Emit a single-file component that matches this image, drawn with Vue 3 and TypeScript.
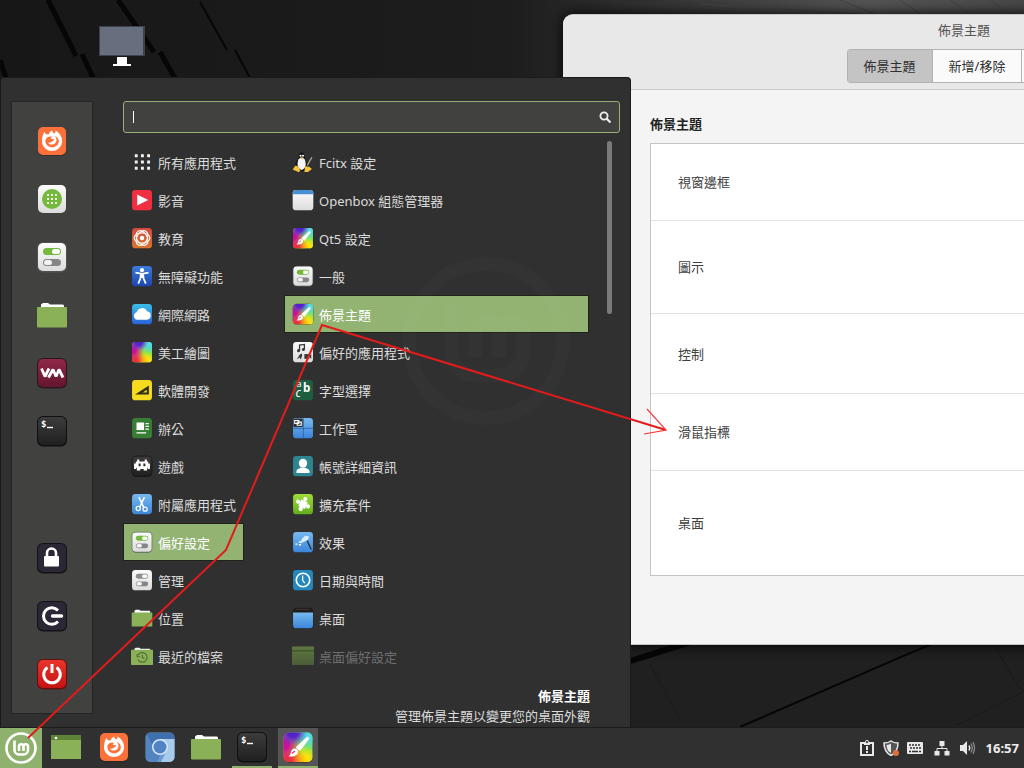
<script setup lang="ts">
import { h, ref } from 'vue'

interface Entry {
  icon: string
  label: string
  faded?: boolean
}

interface Glyph {
  text: string
  x: number
  y: number
  size: number
  weight?: number
  italic?: boolean
  mono?: boolean
}

const glyphs: Record<string, Glyph[]> = {
  terminal: [{ text: '$', x: 5, y: 12, size: 9, weight: 700, mono: true }],
  fonts: [
    { text: 'a', x: 6, y: 12, size: 14 },
    { text: 'b', x: 16, y: 19, size: 17, weight: 700 },
    { text: 'c', x: 5, y: 26, size: 17, italic: true },
  ],
}

const Icon = (props: { name: string }) =>
  h('svg', { viewBox: '0 0 32 32', 'aria-hidden': 'true' }, [
    h('use', { href: '#i-' + props.name, width: 32, height: 32 }),
    ...(glyphs[props.name] ?? []).map((g) =>
      h(
        'text',
        {
          x: g.x,
          y: g.y,
          fill: '#fff',
          'font-size': g.size,
          'font-weight': g.weight ?? 400,
          'font-style': g.italic ? 'italic' : 'normal',
          'font-family': g.mono ? "'DejaVu Sans Mono', monospace" : "'Noto Sans', sans-serif",
        },
        g.text,
      ),
    ),
  ])
Icon.props = ['name']

const favorites: Entry[] = [
  { icon: 'firefox', label: 'Firefox' },
  { icon: 'software', label: '軟體管理員' },
  { icon: 'toggles', label: '系統設定' },
  { icon: 'folder', label: '檔案' },
  { icon: 'vmm', label: '虛擬機器管理員' },
  { icon: 'terminal', label: '終端機' },
]

const session: Entry[] = [
  { icon: 'lock', label: '鎖定螢幕' },
  { icon: 'logout', label: '登出' },
  { icon: 'power', label: '關機' },
]

const categories: Entry[] = [
  { icon: 'grid', label: '所有應用程式' },
  { icon: 'media', label: '影音' },
  { icon: 'education', label: '教育' },
  { icon: 'access', label: '無障礙功能' },
  { icon: 'cloud', label: '網際網路' },
  { icon: 'rainbow', label: '美工繪圖' },
  { icon: 'develop', label: '軟體開發' },
  { icon: 'office', label: '辦公' },
  { icon: 'games', label: '遊戲' },
  { icon: 'scissors', label: '附屬應用程式' },
  { icon: 'toggles', label: '偏好設定' },
  { icon: 'admin', label: '管理' },
  { icon: 'folder', label: '位置' },
  { icon: 'recent', label: '最近的檔案' },
]

const apps: Entry[] = [
  { icon: 'tux', label: 'Fcitx 設定' },
  { icon: 'window', label: 'Openbox 組態管理器' },
  { icon: 'brush', label: 'Qt5 設定' },
  { icon: 'toggles', label: '一般' },
  { icon: 'brush', label: '佈景主題' },
  { icon: 'preferred', label: '偏好的應用程式' },
  { icon: 'fonts', label: '字型選擇' },
  { icon: 'workspaces', label: '工作區' },
  { icon: 'account', label: '帳號詳細資訊' },
  { icon: 'puzzle', label: '擴充套件' },
  { icon: 'wand', label: '效果' },
  { icon: 'clock', label: '日期與時間' },
  { icon: 'desktop', label: '桌面' },
  { icon: 'deskpref', label: '桌面偏好設定', faded: true },
]

const launchers: Entry[] = [
  { icon: 'firefox', label: 'Firefox' },
  { icon: 'chromium', label: 'Chromium' },
  { icon: 'folder', label: '檔案' },
  { icon: 'terminal', label: '終端機' },
  { icon: 'brush', label: '佈景主題' },
]

const themeRows = [
  { label: '視窗邊框', size: 'r1' },
  { label: '圖示', size: 'r2' },
  { label: '控制', size: 'r3' },
  { label: '滑鼠指標', size: 'r4' },
  { label: '桌面', size: 'r5' },
]

const tabs = ['佈景主題', '新增/移除', '設定']

const activeCategory = ref('偏好設定')
const activeApp = ref(4)
const activeTab = ref(0)
const query = ref('')
</script>

<template>
  <div class="screen">
    <svg class="defs" width="0" height="0" aria-hidden="true">
      <defs>
        <linearGradient id="gWhite" x1="0" y1="0" x2="0" y2="1"><stop offset="0" stop-color="#fbfbfb" /><stop offset="1" stop-color="#dcdcdc" /></linearGradient>
        <linearGradient id="gDark" x1="0" y1="0" x2="0" y2="1"><stop offset="0" stop-color="#3c3c3c" /><stop offset="1" stop-color="#202020" /></linearGradient>
        <linearGradient id="gOrange" x1="0" y1="0" x2="0" y2="1"><stop offset="0" stop-color="#d5493f" /><stop offset="1" stop-color="#d9762f" /></linearGradient>
        <linearGradient id="gBlue" x1="0" y1="0" x2="0" y2="1"><stop offset="0" stop-color="#3b7bdc" /><stop offset="1" stop-color="#1d45ae" /></linearGradient>
        <linearGradient id="gCloud" x1="0" y1="0" x2="0" y2="1"><stop offset="0" stop-color="#39bfe8" /><stop offset="1" stop-color="#2a62d8" /></linearGradient>
        <linearGradient id="gSky" x1="0" y1="0" x2="0" y2="1"><stop offset="0" stop-color="#76b9f0" /><stop offset="1" stop-color="#3b85da" /></linearGradient>
        <linearGradient id="gRed" x1="0" y1="0" x2="0" y2="1"><stop offset="0" stop-color="#e8352e" /><stop offset="1" stop-color="#c41212" /></linearGradient>
        <linearGradient id="gLime" x1="0" y1="0" x2="0" y2="1"><stop offset="0" stop-color="#a0dc3a" /><stop offset="1" stop-color="#62ac1e" /></linearGradient>
        <linearGradient id="gWine" x1="0" y1="0" x2="0" y2="1"><stop offset="0" stop-color="#8f2848" /><stop offset="1" stop-color="#65152f" /></linearGradient>
        <linearGradient id="gFade" x1="0" y1="0" x2="0" y2="1"><stop offset="0" stop-color="#60793f" /><stop offset="1" stop-color="#4b5c39" /></linearGradient>
        <radialGradient id="hBlue" gradientUnits="userSpaceOnUse" cx="11" cy="1" r="14"><stop offset="0" stop-color="#4a1fd0" /><stop offset=".4" stop-color="#5a24c8" /><stop offset="1" stop-color="#5a50e0" stop-opacity="0" /></radialGradient>
        <radialGradient id="hCyan" gradientUnits="userSpaceOnUse" cx="28" cy="3" r="18"><stop offset="0" stop-color="#52dfe0" /><stop offset=".3" stop-color="#52d8e0" /><stop offset="1" stop-color="#5ad0e0" stop-opacity="0" /></radialGradient>
        <radialGradient id="hPink" gradientUnits="userSpaceOnUse" cx="2" cy="13" r="17"><stop offset="0" stop-color="#c40ca8" /><stop offset=".3" stop-color="#cc1098" /><stop offset="1" stop-color="#e82880" stop-opacity="0" /></radialGradient>
        <radialGradient id="hRed" gradientUnits="userSpaceOnUse" cx="5" cy="30" r="19"><stop offset="0" stop-color="#ea283c" /><stop offset=".3" stop-color="#f0383c" /><stop offset="1" stop-color="#f88020" stop-opacity="0" /></radialGradient>
        <radialGradient id="hYellow" gradientUnits="userSpaceOnUse" cx="22" cy="31" r="16"><stop offset="0" stop-color="#ffd800" /><stop offset=".4" stop-color="#ffe010" /><stop offset="1" stop-color="#f8e820" stop-opacity="0" /></radialGradient>
        <clipPath id="tileClip"><rect x="1.500" y="1.500" width="29" height="29.500" rx="5" /></clipPath>
      </defs>

      <symbol id="i-firefox" viewBox="0 0 32 32">
        <rect x="2" y="3" width="28" height="28" rx="5" fill="#222" opacity=".5" />
        <rect x="2" y="2" width="28" height="28" rx="5" fill="#fb7139" />
        <path d="M8.500 6.500c.3 1.500 1 2.300 2 3 .8-.3 1.600-.4 2.400-.3 .4-1.600 1.600-3 3.300-3.700 0 1.500 1 2.200 2.300 3 .8-.6 1.200-1.500 .8-3 4 2 6.800 6 6.800 10.500 0 5.600-4.500 10-10.100 10S6 21.600 6 16c0-3.500 .8-6.500 2.500-9.500Z" fill="#fff" />
        <path d="M11.500 12.300c1.500-1 3.500-1.300 5-.3-1.300 .2-1.800 1-1.600 1.500 .5 .8 2.600 .2 3.200 1-.2 1.400-2 1.600-2.800 2.500-1 1-2.500 .8-3.500 .2 .8 1.500 2.200 2.300 4 2.300 2.700 0 4.700-2 4.700-4.500 0-1.700-.8-3-2-4 3 .8 4.300 3 4.300 5.300 0 3.500-2.900 6-6.600 6-3.800 0-6.800-2.800-6.800-6.300 0-1.500 .8-2.800 2.100-3.700Z" fill="#fb7139" />
      </symbol>
      <symbol id="i-software" viewBox="0 0 32 32">
        <rect x="2" y="2" width="28" height="28" rx="5" fill="url(#gWhite)" />
        <circle cx="16" cy="16" r="10" fill="#72b93c" />
        <path d="M11 12h10M11 16h10M11 20h10" stroke="#f0fae6" stroke-width="2" stroke-dasharray="2 2" />
      </symbol>
      <symbol id="i-toggles" viewBox="0 0 32 32">
        <rect x="1" y="1" width="30" height="30.500" rx="6" fill="#555" opacity=".8" />
        <rect x="2" y="2" width="28" height="28" rx="5" fill="url(#gWhite)" />
        <rect x="7" y="7" width="18" height="7" rx="3.500" fill="#72b93c" />
        <rect x="16" y="8" width="8" height="5" rx="2.500" fill="#fff" />
        <rect x="7" y="18" width="18" height="7" rx="3.500" fill="#858585" />
        <rect x="8" y="19" width="8" height="5" rx="2.500" fill="#f3f3f3" />
      </symbol>
      <symbol id="i-admin" viewBox="0 0 32 32">
        <rect x="1.500" y="1.500" width="29" height="29.500" rx="5" fill="url(#gWhite)" />
        <rect x="7" y="7" width="18" height="7" rx="3.500" fill="#8d8d8d" />
        <rect x="16" y="8" width="8" height="5" rx="2.500" fill="#f5f5f5" />
        <rect x="7" y="18" width="18" height="7" rx="3.500" fill="#858585" />
        <rect x="8" y="19" width="8" height="5" rx="2.500" fill="#f3f3f3" />
      </symbol>
      <symbol id="i-folder" viewBox="0 0 32 32">
        <path d="M5 9V5.500L7 4h5l2 1.500h13l1 1V9Z" fill="#fff" />
        <rect x="1" y="8" width="30" height="20.500" rx="1" fill="#8bb158" />
      </symbol>
      <symbol id="i-recent" viewBox="0 0 32 32">
        <path d="M5 9V5.500L7 4h5l2 1.500h13l1 1V9Z" fill="#fff" />
        <rect x="0" y="7" width="32" height="22" rx="1" fill="#8bb158" />
        <path d="M10 15a7 7 0 1 1 0 6M9 13v4h4M16.500 14v4l3 2" fill="none" stroke="#55733a" stroke-width="1.800" />
      </symbol>
      <symbol id="i-vmm" viewBox="0 0 32 32">
        <rect x="1" y="1" width="30" height="30.500" rx="6" fill="#2a1a20" />
        <rect x="2" y="2" width="28" height="28" rx="5" fill="url(#gWine)" />
        <path d="M5.500 11.500 9 19.500 13 11.500M12.500 20.500 17 12.500 20 19.500 23 12.500 27 20.500" fill="none" stroke="#fff" stroke-width="2.800" stroke-linejoin="bevel" />
      </symbol>
      <symbol id="i-terminal" viewBox="0 0 32 32">
        <rect x="1" y="1" width="30" height="30.500" rx="6" fill="#101010" />
        <rect x="2" y="2" width="28" height="28" rx="5" fill="url(#gDark)" />
        <path d="M11 12.500h6" stroke="#fff" stroke-width="1.400" />
      </symbol>
      <symbol id="i-lock" viewBox="0 0 32 32">
        <rect x="1" y="1" width="30" height="30.500" rx="6" fill="#141218" />
        <rect x="2" y="2" width="28" height="28" rx="5" fill="#2c2734" />
        <rect x="8" y="14" width="15" height="10.500" rx="1" fill="#fff" />
        <path d="M11 15v-4a4.500 4.500 0 0 1 9 0v4" fill="none" stroke="#fff" stroke-width="2.600" />
      </symbol>
      <symbol id="i-logout" viewBox="0 0 32 32">
        <rect x="1" y="1" width="30" height="30.500" rx="6" fill="#141218" />
        <rect x="2" y="2" width="28" height="28" rx="5" fill="#2c2734" />
        <path d="M22 10.500a8.300 8.300 0 1 0 0 11" fill="none" stroke="#fff" stroke-width="3" />
        <path d="M16.500 16h9" stroke="#fff" stroke-width="3.400" stroke-linecap="round" />
      </symbol>
      <symbol id="i-power" viewBox="0 0 32 32">
        <rect x="1" y="1" width="30" height="30.500" rx="6" fill="#651010" />
        <rect x="2" y="2" width="28" height="28" rx="5" fill="url(#gRed)" />
        <path d="M11.500 9.500a8.300 8.300 0 1 0 9 0M16 6v9" fill="none" stroke="#fff" stroke-width="3" />
      </symbol>
      <symbol id="i-grid" viewBox="0 0 32 32">
        <path d="M5.500 7h22.500M5.500 16h22.500M5.500 25h22.500" stroke="#f4f4f4" stroke-width="4.200" stroke-dasharray="4.200 4.800" />
      </symbol>
      <symbol id="i-media" viewBox="0 0 32 32">
        <rect x="1.500" y="1.500" width="29" height="29.500" rx="5" fill="#f12f42" />
        <path d="M9 8 25 16 9 24Z" fill="#fff" />
      </symbol>
      <symbol id="i-education" viewBox="0 0 32 32">
        <rect x="1.500" y="1.500" width="29" height="29.500" rx="5" fill="url(#gOrange)" />
        <g fill="none" stroke="#fff" stroke-width="1.600">
          <ellipse cx="16" cy="16" rx="11.500" ry="7.500" />
          <ellipse cx="16" cy="16" rx="11.500" ry="7.500" transform="rotate(60 16 16)" />
          <ellipse cx="16" cy="16" rx="11.500" ry="7.500" transform="rotate(120 16 16)" />
        </g>
        <circle cx="16" cy="16" r="3.200" fill="#fff" />
      </symbol>
      <symbol id="i-access" viewBox="0 0 32 32">
        <rect x="1.500" y="1.500" width="29" height="29.500" rx="5" fill="url(#gBlue)" />
        <circle cx="16" cy="7.500" r="3" fill="#fff" />
        <path d="M6.500 11 16 13 25.500 11M16 13v6M14.500 14 13.500 20 10.500 27M17.500 14 18.500 20 21.500 27" fill="none" stroke="#fff" stroke-width="2.600" />
      </symbol>
      <symbol id="i-cloud" viewBox="0 0 32 32">
        <rect x="1.500" y="1.500" width="29" height="29.500" rx="5" fill="url(#gCloud)" />
        <path d="M9 24.500a5.700 5.700 0 0 1-.8-11 8 8 0 0 1 15-1.500 6.300 6.300 0 0 1 0 12.500Z" fill="#fff" />
      </symbol>
      <symbol id="i-rainbow" viewBox="0 0 32 32">
        <g clip-path="url(#tileClip)">
          <rect width="32" height="32" fill="#8ae838" />
          <rect width="32" height="32" fill="url(#hCyan)" />
          <rect width="32" height="32" fill="url(#hYellow)" />
          <rect width="32" height="32" fill="url(#hRed)" />
          <rect width="32" height="32" fill="url(#hPink)" />
          <rect width="32" height="32" fill="url(#hBlue)" />
        </g>
      </symbol>
      <symbol id="i-brush" viewBox="0 0 32 32">
        <rect x="1" y="1" width="30" height="30.500" rx="6" fill="#26202a" opacity=".8" />
        <g clip-path="url(#tileClip)">
          <rect width="32" height="32" fill="#8ae838" />
          <rect width="32" height="32" fill="url(#hCyan)" />
          <rect width="32" height="32" fill="url(#hYellow)" />
          <rect width="32" height="32" fill="url(#hRed)" />
          <rect width="32" height="32" fill="url(#hPink)" />
          <rect width="32" height="32" fill="url(#hBlue)" />
        </g>
        <path d="M25.500 6 27 7.500 18 19.500 14 16.500Z" fill="#fff" stroke="#fff" stroke-linejoin="round" />
        <path d="M12.500 17.500c2.500 0 4 2 3.500 4-.8 3.500-5 4.500-9.500 3.800 2-1 2.200-2.800 2.600-4.500 .5-2 1.500-3.200 3.400-3.300Z" fill="#fff" />
        <path d="M10 22.500 13 20" stroke="#e5305a" stroke-width="1.200" />
      </symbol>
      <symbol id="i-develop" viewBox="0 0 32 32">
        <rect x="1.500" y="1.500" width="29" height="29.500" rx="5" fill="#f7db1e" />
        <path d="M6 22.500 26 9.500V22.500ZM17 19.500h6v-4Z" fill="#30301c" fill-rule="evenodd" />
      </symbol>
      <symbol id="i-office" viewBox="0 0 32 32">
        <rect x="1.500" y="1.500" width="29" height="29.500" rx="5" fill="#377d35" />
        <rect x="8" y="8" width="11" height="11" fill="#fff" />
        <path d="M21 9.500h5M21 13.500h5M21 17.500h5M8 23h14" stroke="#fff" stroke-width="1.800" />
      </symbol>
      <symbol id="i-games" viewBox="0 0 32 32">
        <rect x="1" y="1" width="30" height="30.500" rx="6" fill="#101010" />
        <rect x="2" y="2" width="28" height="28" rx="5" fill="url(#gDark)" />
        <path d="M9 6.500h3v3h8v-3h3v3h2v3h2.500v8h-3v-2h-1v4h-5v-2h-5v2h-5v-4h-1v2h-3v-8H7v-3h2Zm2 6v4h3v-4Zm7 0v4h3v-4Z" fill="#fff" fill-rule="evenodd" />
      </symbol>
      <symbol id="i-scissors" viewBox="0 0 32 32">
        <rect x="1.500" y="1.500" width="29" height="29.500" rx="5" fill="url(#gSky)" />
        <path d="M11.500 6 18.500 21M19.500 6 13 20" stroke="#fff" stroke-width="2.200" />
        <circle cx="10.500" cy="22.500" r="3" fill="none" stroke="#fff" stroke-width="1.800" />
        <circle cx="20.500" cy="23.500" r="3" fill="none" stroke="#fff" stroke-width="1.800" />
      </symbol>
      <symbol id="i-tux" viewBox="0 0 32 32">
        <path d="M14 2c3.500 0 4 3 4 6 0 4 5.500 8 5.500 14 0 5-4 7-9.500 7s-9.500-2-9.500-7c0-6 5.500-10 5.500-14 0-3 .5-6 4-6Z" fill="#151515" />
        <ellipse cx="14" cy="18.500" rx="6" ry="9" fill="#f4f4f4" />
        <circle cx="12.500" cy="7" r="1.500" fill="#fff" /><circle cx="16" cy="7" r="1.500" fill="#fff" />
        <path d="M12 9.500h5l-2.500 2Z" fill="#f0b020" />
        <path d="M1 27 5 21l4 1.500 3 6-2 2.500ZM19 22l6 1 4 3-6 4.500h-5Z" fill="#f5c33b" />
        <path d="M29 9 22 21" stroke="#b9b4a2" stroke-width="1.800" />
      </symbol>
      <symbol id="i-window" viewBox="0 0 32 32">
        <rect x="1" y="1.500" width="30" height="29.500" rx="5" fill="url(#gWhite)" />
        <path d="M1 7.500V6a5 5 0 0 1 5-4.500h20a5 5 0 0 1 5 4.500v1.500Z" fill="#478fd0" />
      </symbol>
      <symbol id="i-preferred" viewBox="0 0 32 32">
        <rect x="1.500" y="1.500" width="29" height="29.500" rx="5" fill="url(#gWhite)" />
        <path d="M11 14V6l7-1v7" fill="none" stroke="#383838" stroke-width="1.900" />
        <circle cx="9.500" cy="14" r="2.200" fill="#383838" /><circle cx="16.500" cy="12.500" r="2.200" fill="#383838" />
        <path d="M7 27l4-7 3-2 1 2-2 7-2-3Z" fill="#383838" />
        <rect x="18" y="19" width="7" height="7" fill="#383838" /><path d="m24 22.500 4-3.500v7Z" fill="#383838" />
      </symbol>
      <symbol id="i-fonts" viewBox="0 0 32 32">
        <rect x="1.500" y="1.500" width="29" height="29.500" rx="5" fill="#1d5e41" />
      </symbol>
      <symbol id="i-workspaces" viewBox="0 0 32 32">
        <rect x="1.500" y="1.500" width="29" height="29.500" rx="5" fill="url(#gSky)" />
        <path d="M16.500 2v29M2 16.500h29" stroke="#2f5f9c" stroke-width="1.200" />
        <path d="M2 14.500V6a4 4 0 0 1 4-4h9.500v12.500Z" fill="#303030" />
        <path d="M4 5h6v4.500H4ZM7.500 7.500h6V12h-6Z" fill="#303030" stroke="#fff" stroke-width="1.600" />
      </symbol>
      <symbol id="i-account" viewBox="0 0 32 32">
        <rect x="1.500" y="1.500" width="29" height="29.500" rx="5" fill="#2e8592" />
        <rect x="10" y="5.500" width="12" height="13" rx="6" fill="#fff" />
        <path d="M6.500 26v-2.500c0-3 4-3.500 6-5h7c2 1.500 6 2 6 5V26Z" fill="#fff" />
      </symbol>
      <symbol id="i-puzzle" viewBox="0 0 32 32">
        <rect x="1.500" y="1.500" width="29" height="29.500" rx="5" fill="url(#gLime)" />
        <g fill="#fff" transform="rotate(25 16 16)">
          <rect x="11" y="11" width="10.500" height="10.500" />
          <circle cx="16" cy="8" r="3" /><circle cx="16" cy="24" r="3" /><circle cx="8" cy="16" r="3" /><circle cx="24" cy="16" r="3" />
        </g>
      </symbol>
      <symbol id="i-wand" viewBox="0 0 32 32">
        <rect x="1.500" y="1.500" width="29" height="29.500" rx="5" fill="url(#gSky)" />
        <path d="M12 18 14 12l5-5 6 1-2 5-4 2Z" fill="#e6f4ff" opacity=".9" />
        <path d="M22 14 28 27" stroke="#293543" stroke-width="2" />
        <path d="M5 19h3M10 16h3M10 20h3" stroke="#fff" stroke-width="2" />
      </symbol>
      <symbol id="i-clock" viewBox="0 0 32 32">
        <rect x="1.500" y="1.500" width="29" height="29.500" rx="5" fill="#2588bd" />
        <circle cx="16" cy="16" r="9.800" fill="none" stroke="#fff" stroke-width="2.400" />
        <path d="M15.500 9.500v7l3 4" fill="none" stroke="#fff" stroke-width="1.800" />
      </symbol>
      <symbol id="i-desktop" viewBox="0 0 32 32">
        <rect x="1" y="1" width="30" height="30.500" rx="5.500" fill="#1d1d1d" />
        <path d="M6 3.500h20" stroke="#564537" stroke-width="1" />
        <path d="M1.500 8h29v18a5 5 0 0 1-5 5h-19a5 5 0 0 1-5-5Z" fill="url(#gSky)" />
      </symbol>
      <symbol id="i-deskpref" viewBox="0 0 32 32">
        <rect x="0" y="2" width="32" height="27" rx="1" fill="url(#gFade)" />
        <path d="M0 8.500h32" stroke="#42552f" stroke-width="2" />
      </symbol>
      <symbol id="i-showdesk" viewBox="0 0 32 32">
        <rect x="1" y="4" width="30" height="24" fill="#8bb158" />
        <rect x="1" y="4" width="30" height="5" fill="#5f8239" />
        <circle cx="6" cy="7" r="1.300" fill="#fff" />
      </symbol>
      <symbol id="i-chromium" viewBox="0 0 32 32">
        <g clip-path="url(#tileClip)">
          <rect width="32" height="32" fill="#6a9bd0" />
          <path d="M2 2h28v7H12L8 14Z" fill="#3f6fac" />
          <path d="M2 2l8 16 6 7-3 6H2Z" fill="#5384bf" />
          <path d="M16 8h15v23H17l6-12Z" fill="#a9caea" />
        </g>
        <circle cx="16" cy="16" r="8" fill="#d9e8f8" />
        <circle cx="16" cy="16" r="6.500" fill="#4f83c4" />
      </symbol>
      <symbol id="i-mint" viewBox="0 0 32 32">
        <circle cx="16" cy="16" r="14.500" fill="none" stroke="#fff" stroke-width="2.600" />
        <path d="M9.500 8.500v9.500a4.500 4.500 0 0 0 4.500 4.500h4.500a4.500 4.500 0 0 0 4.500-4.500v-3.500a2.200 2.200 0 0 0-4.500 0v4.500M18.500 14.500a2.200 2.200 0 0 0-4.500 0v4.500" fill="none" stroke="#fff" stroke-width="2.600" />
      </symbol>
    </svg>

    <main class="workspace">
      <svg class="wallpaper" viewBox="0 0 1024 728" preserveAspectRatio="none" aria-hidden="true">
        <defs>
          <linearGradient id="wallTop" x1="0" y1="0" x2="1" y2="0">
            <stop offset="0" stop-color="#171717" /><stop offset=".5" stop-color="#1d1d1d" />
            <stop offset=".62" stop-color="#303030" /><stop offset=".85" stop-color="#555" /><stop offset="1" stop-color="#484848" />
          </linearGradient>
        </defs>
        <rect width="1024" height="728" fill="#202020" />
        <rect width="1024" height="120" fill="url(#wallTop)" />
        <g fill="none" stroke="#060606" stroke-width="5">
          <path d="M48 0 76 56M82 54 94 80M118 0 154 52M160 52 176 80M0 60 6 78" />
          <path d="M200 2 227 50M235 50 250 78" stroke-width="2" />
          <path d="M630 662 690 643" stroke-width="6" />
          <path d="M740 728 850 680 896 660 936 643" stroke-width="2" />
        </g>
        <path d="M955 727 1024 692M995 648 1020 690M650 665 680 720" fill="none" stroke="#1a1a1a" />
        <path d="M840 0 875 14M900 0 920 14M950 0 970 14M990 0 1010 14M700 4 860 14" fill="none" stroke="#444" />
      </svg>

      <a class="computer" href="#" aria-label="電腦">
        <svg width="46" height="42" viewBox="0 0 46 42" aria-hidden="true">
          <rect x="0" y="0" width="46" height="30" fill="#3d424c" />
          <rect x="1" y="1" width="43" height="28" fill="#676e7d" />
          <path d="M18 31h10v7h4v2H14v-2h4Z" fill="#fff" />
        </svg>
      </a>

      <section class="themes">
        <header class="bar">
          <h1>佈景主題</h1>
          <nav class="tabs">
            <button v-for="(t, i) in tabs" :key="t" type="button" :class="{ on: i === activeTab }" @click="activeTab = i">{{ t }}</button>
          </nav>
        </header>
        <div class="body">
          <h2>佈景主題</h2>
          <ul class="options">
            <li v-for="r in themeRows" :key="r.label" :class="r.size">{{ r.label }}</li>
          </ul>
        </div>
      </section>

      <section class="menu">
        <Icon class="ghost" name="mint" />
        <aside class="side">
          <div>
            <button v-for="f in favorites" :key="f.icon" type="button" :aria-label="f.label"><Icon :name="f.icon" /></button>
          </div>
          <div>
            <button v-for="f in session" :key="f.icon" type="button" :aria-label="f.label"><Icon :name="f.icon" /></button>
          </div>
        </aside>
        <div class="content">
          <label class="search">
            <input v-model="query" type="text" aria-label="搜尋" />
            <svg width="12" height="12" viewBox="0 0 12 12" aria-hidden="true">
              <circle cx="5" cy="5" r="3.600" fill="none" stroke="#eee" stroke-width="1.800" />
              <path d="m7.500 7.500 4 4" stroke="#eee" stroke-width="2.200" />
            </svg>
          </label>
          <div class="columns">
            <div class="list cats">
              <button v-for="c in categories" :key="c.label" type="button" :class="{ on: c.label === activeCategory }" @click="activeCategory = c.label">
                <Icon :name="c.icon" /><span>{{ c.label }}</span>
              </button>
            </div>
            <div class="list apps">
              <button v-for="(a, i) in apps" :key="a.label" type="button" :class="{ on: i === activeApp, faded: a.faded }" @mouseenter="activeApp = i">
                <Icon :name="a.icon" /><span>{{ a.label }}</span>
              </button>
            </div>
            <div class="scroll"></div>
          </div>
          <footer class="about">
            <strong>佈景主題</strong>
            <span>管理佈景主題以變更您的桌面外觀</span>
          </footer>
        </div>
      </section>

      <svg class="marks" aria-hidden="true">
        <path d="M28 738 226 550 322 325 666 430" />
        <path class="head" d="M647 409 666 430 644 434" />
      </svg>
    </main>

    <footer class="taskbar">
      <button class="start" type="button" aria-label="選單"><Icon name="mint" /></button>
      <button class="task show" type="button" aria-label="顯示桌面"><Icon name="showdesk" /></button>
      <button v-for="l in launchers" :key="l.icon" class="task" :class="{ running: l.icon === 'terminal', active: l.icon === 'brush' }" type="button" :aria-label="l.label">
        <Icon :name="l.icon" />
      </button>
      <div class="tray">
        <svg width="16" height="16" viewBox="0 0 16 16"><path d="M2 3h12v12H2Z" fill="none" stroke="#e8e8e8" stroke-width="2" /><circle cx="8" cy="2" r="1.600" fill="#303030" stroke="#e8e8e8" /><path d="M5 3h6v2H5Z" fill="#e8e8e8" /><path d="M8 6v4M8 11v2" stroke="#e8e8e8" stroke-width="2" /></svg>
        <svg width="16" height="16" viewBox="0 0 16 16"><path d="M8 1c2 1.500 4.500 2 7 2 0 6-2 10-7 12.500C3 13 1 9 1 3c2.500 0 5-.5 7-2Z" fill="#555" stroke="#e8e8e8" stroke-width="1.500" /><path d="M8 3.500c-1 .7-2.500 1.300-4.500 1.500 .3 4 1.500 6.500 4.500 8Z" fill="#e8e8e8" /><circle cx="13" cy="13" r="3" fill="#e07038" /></svg>
        <svg width="16" height="16" viewBox="0 0 16 16"><rect y="2" width="16" height="12" rx="1" fill="#e8e8e8" /><path d="M2 5h12M3 8h11" stroke="#303030" stroke-width="1.600" stroke-dasharray="2 1" /><path d="M2 11.500h2M5 11.500h6M12 11.500h2" stroke="#303030" stroke-width="1.600" /></svg>
        <svg class="net" width="16" height="16" viewBox="0 0 16 16"><path d="M5.500 1h5v5h-5ZM.5 11h5v4.500h-5ZM10.500 11h5v4.500h-5Z" fill="#e8e8e8" /><path d="M8 5v4M3 11V8.500h10V11" fill="none" stroke="#e8e8e8" /></svg>
        <svg class="vol" width="16" height="16" viewBox="0 0 16 16"><path d="M0 5h3l4-4v14l-4-4H0Z" fill="#e8e8e8" /><path d="M9 5.500q1.500 2.500 0 5" fill="none" stroke="#e8e8e8" stroke-width="1.500" /><path d="M11 3.500q2.500 4.500 0 9M13 2q3 6 0 12" fill="none" stroke="#888" stroke-width="1.300" /></svg>
        <time>16:57</time>
      </div>
    </footer>
  </div>
</template>

<style>
body {
  margin: 0;
  background: #1c1c1c;
}
</style>

<style scoped>
* {
  box-sizing: border-box;
}
.screen {
  display: flex;
  flex-direction: column;
  min-height: 100vh;
  overflow: hidden;
  font-family: 'Noto Sans', 'Noto Sans CJK TC', sans-serif;
  font-size: 13px;
  line-height: 20px;
}
.defs {
  position: absolute;
}
button {
  margin: 0;
  padding: 0;
  border: 0;
  background: none;
  color: inherit;
  font: inherit;
  cursor: pointer;
}
.workspace {
  position: relative;
  flex: 1;
}
.wallpaper {
  position: absolute;
  inset: 0;
  width: 100%;
  height: 100%;
}
.computer {
  position: absolute;
  left: 99px;
  top: 26px;
}

.themes {
  position: absolute;
  left: 563px;
  top: 14px;
  width: 802px;
  overflow: hidden;
  border-top: 1px solid #c9c9c9;
  border-bottom: 1px solid #c4c4c4;
  border-radius: 10px 10px 0 0;
  background: #f4f4f4;
  color: #404040;
  box-shadow: 0 0 14px #000;
}
.bar {
  display: flex;
  flex-direction: column;
  align-items: center;
  gap: 9px;
  padding: 5px 0 6px;
  border-bottom: 1px solid #c8c8c8;
  background: #e8e8e8;
}
.bar h1 {
  margin: 0;
  color: #555;
  font-size: 13px;
  font-weight: 400;
}
.tabs {
  display: flex;
  border: 1px solid #b2b2b2;
  border-radius: 3px;
  background: #fafafa;
  color: #303030;
}
.tabs button {
  height: 32px;
  padding: 0 16px;
}
.tabs button + button {
  border-left: 1px solid #b2b2b2;
}
.tabs .on {
  background: #c4c4c4;
}
.body {
  padding: 24px 87px 68px;
}
.body h2 {
  margin: 0 0 9px;
  color: #222;
  font-size: 13px;
  font-weight: 700;
}
.options {
  margin: 0;
  padding: 0;
  border: 1px solid #c4c4c4;
  background: #fff;
  list-style: none;
}
.options li {
  display: flex;
  align-items: center;
  padding: 0 27px;
}
.options li + li {
  border-top: 1px solid #e2e2e2;
}
.r1 {
  height: 76px;
}
.r2 {
  height: 93px;
}
.r3 {
  height: 80px;
}
.r4 {
  height: 77px;
}
.r5 {
  height: 105px;
}

.menu {
  position: absolute;
  left: 0;
  bottom: 0;
  display: flex;
  gap: 30px;
  width: 631px;
  padding: 23px 10px 0;
  border: 1px solid #1b1b1b;
  border-bottom: 0;
  border-radius: 4px 4px 0 0;
  background: #303030;
  color: #dcdcdc;
}
.ghost {
  position: absolute;
  left: 400px;
  top: 178px;
  width: 170px;
  height: 170px;
  opacity: 0.01;
}
.side {
  display: flex;
  flex-direction: column;
  justify-content: space-between;
  width: 82px;
  margin-bottom: 13px;
  padding: 10px 0;
  border: 1px solid #242424;
  background: #41413f;
}
.side div {
  display: flex;
  flex-direction: column;
}
.side button {
  display: flex;
  align-items: center;
  justify-content: center;
  height: 58px;
}
.side svg {
  width: 32px;
  height: 32px;
}
.content {
  display: flex;
  flex: 1;
  flex-direction: column;
}
.search {
  display: flex;
  align-items: center;
  height: 32px;
  padding: 0 8px 0 9px;
  border: 1px solid #9aae7a;
  border-radius: 3px;
  background: #41413f;
}
.search input {
  flex: 1;
  min-width: 0;
  height: 12px;
  padding: 0;
  border: 0;
  outline: 0;
  background: linear-gradient(#fff, #fff) 0 0 / 1px 12px no-repeat;
  color: #fff;
  font: inherit;
}
.search input:focus {
  background: none;
}
.columns {
  display: flex;
  margin-top: 10px;
}
.list {
  display: flex;
  flex-direction: column;
}
.list button {
  display: flex;
  align-items: center;
  gap: 5px;
  height: 38px;
  padding: 0 7px;
  border: 1px solid transparent;
  text-align: left;
  white-space: nowrap;
}
.list svg {
  width: 22px;
  height: 22px;
  margin-bottom: 1px;
}
.list span {
  padding-top: 2px;
}
.list .on {
  border-color: #1f241a;
  background: #92b372;
  color: #fff;
}
.list .faded {
  color: #6e6e6e;
}
.cats {
  width: 121px;
}
.apps {
  width: 305px;
  margin-left: 40px;
}
.scroll {
  width: 5px;
  height: 173px;
  margin: -2px 8px 0 auto;
  border-radius: 3px;
  background: #7a7a7a;
}
.about {
  display: flex;
  flex-direction: column;
  align-items: flex-end;
  margin: 11px 30px 1px 0;
}
.about strong {
  color: #fff;
}

.marks {
  position: absolute;
  inset: 0;
  z-index: 3;
  width: 100%;
  height: 100%;
  overflow: visible;
  fill: none;
  stroke: #e31b1b;
  stroke-width: 2;
  pointer-events: none;
}
.marks .head {
  stroke: #f83c3c;
  stroke-width: 1.2;
}

.taskbar {
  display: flex;
  gap: 6px;
  height: 41px;
  border-top: 1px solid #1c1c1c;
  background: #303030;
  color: #eee;
}
.start {
  width: 42px;
  background: #8fb16e;
}
.start svg {
  width: 32px;
  height: 32px;
}
.task {
  width: 40px;
  border-bottom: 2px solid transparent;
}
.show {
  margin: 0 2px 0 -2px;
}
.task svg {
  width: 32px;
  height: 32px;
}
.start svg,
.task svg {
  display: block;
  margin: 0 auto;
}
.running,
.active {
  border-bottom-color: #8fb16e;
}
.active {
  background-color: #555;
}
.tray {
  display: flex;
  align-items: center;
  gap: 8px;
  margin-left: auto;
  padding-right: 5px;
}
.net {
  margin-left: 3px;
}
.vol {
  margin-left: 2px;
}
.tray time {
  margin-left: 2px;
  font-weight: 700;
}
</style>
